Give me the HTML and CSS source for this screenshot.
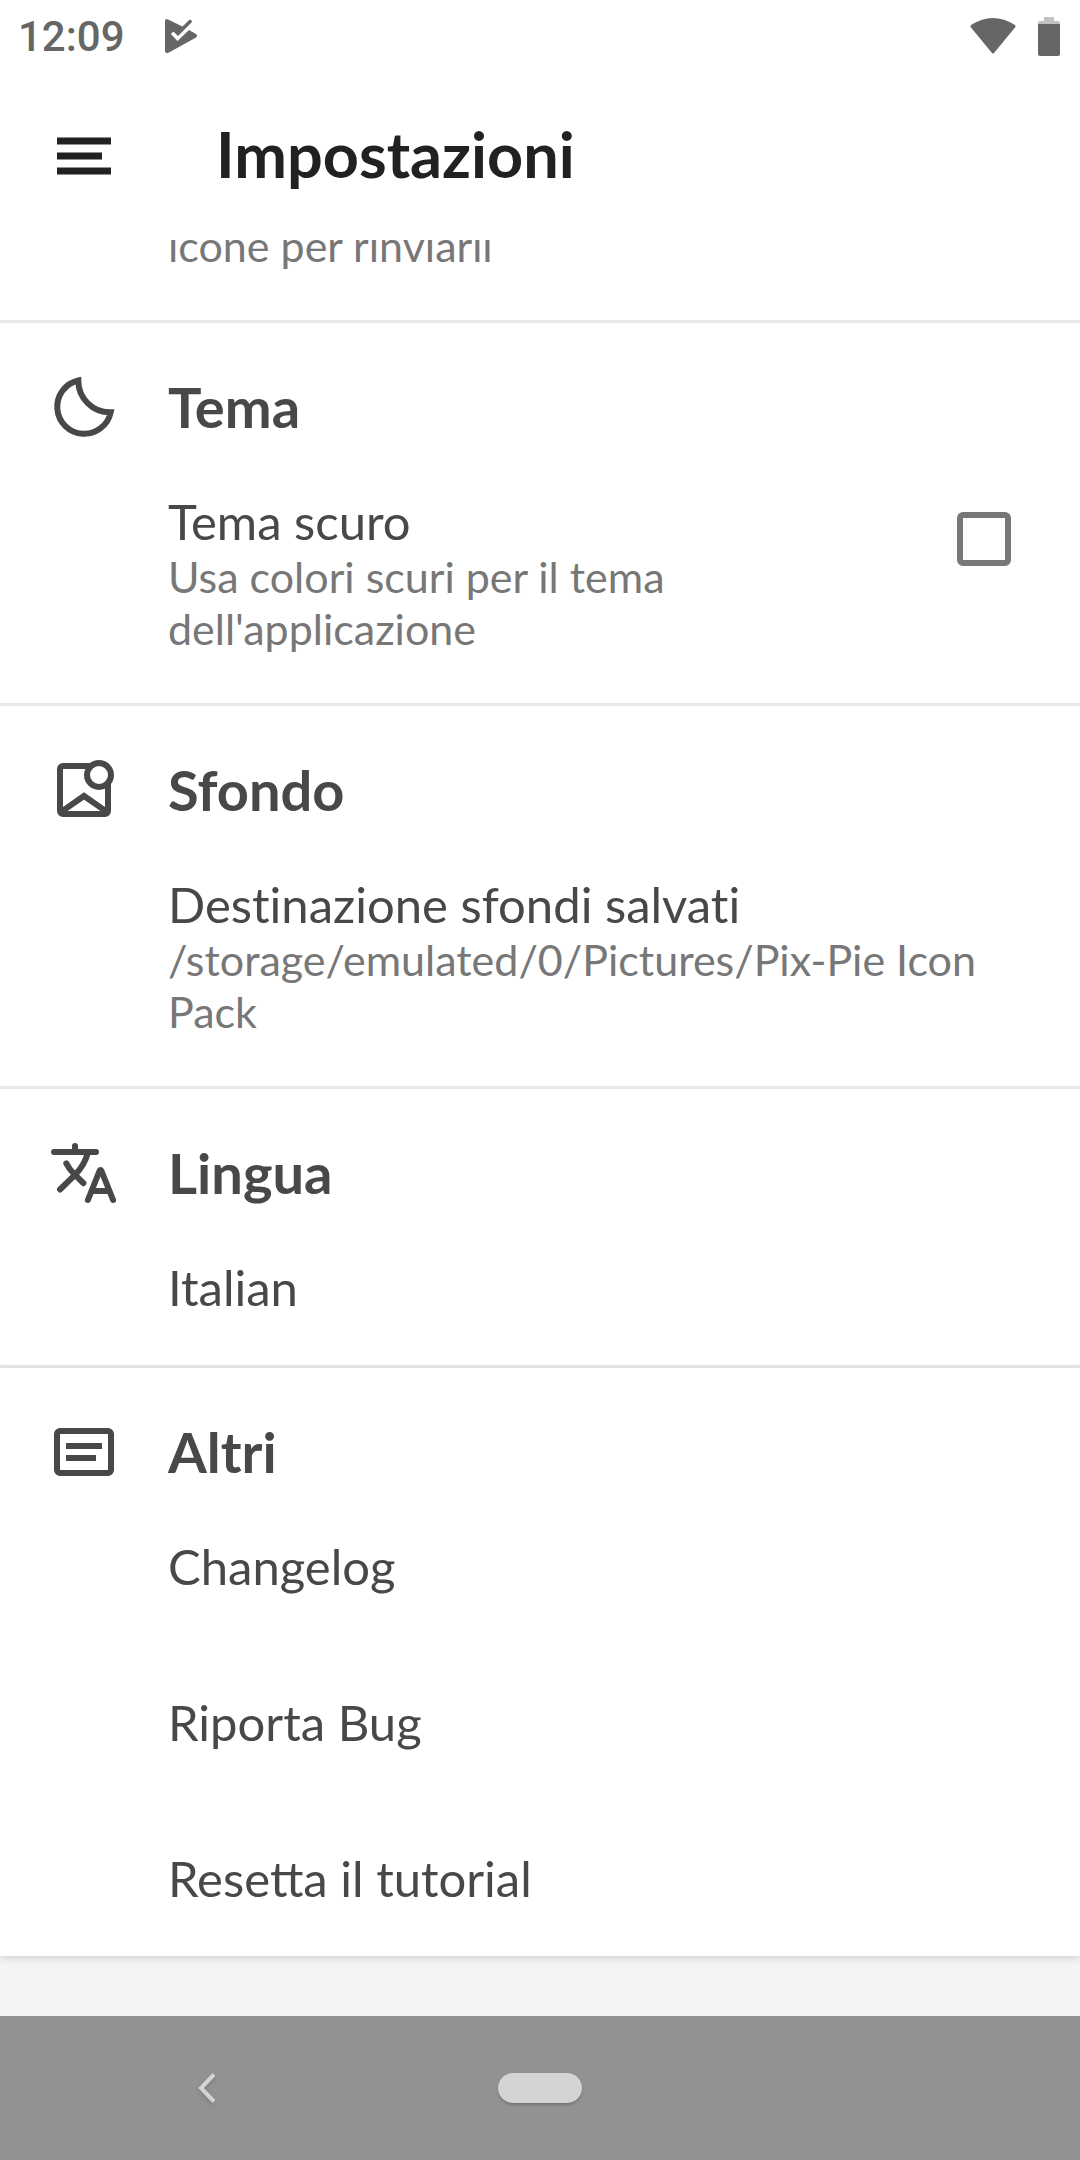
FILE: index.html
```
<!DOCTYPE html>
<html lang="it">
	<head>
		<meta charset="utf-8">
		<meta name="viewport" content="width=device-width, initial-scale=1">
		<title>Impostazioni</title>
		<link rel="stylesheet" href="styles.css">
	</head>
	<body>

		<div class="status">
			<span class="status-time">12:09</span>
			<svg class="status-play" viewBox="0 0 32 34">
				<path fill="#666" d="M0 2Q0-1 3 0.500L17.500 7.500L23.500 1.500Q25 0 26.500 1.500Q27.500 2.500 26.500 3.500L13 17L8.500 12.500L5.800 15L12.500 22L24 11L31 15Q33 17 31 18.500L4 33.500Q0 35 0 32Z"/>
			</svg>
			<svg class="status-wifi" viewBox="0 0 46 36">
				<path fill="#666" d="M1 7Q23-7 45 7Q46 8 45 9.500L24 35Q23 36 22 35L1 9.500Q0 8 1 7Z"/>
			</svg>
			<svg class="status-battery" viewBox="0 0 22 39">
				<path fill="#c2c2c2" d="M6 0h10v4h4q2 0 2 2v2H0V6q0-2 2-2h4z"/>
				<path fill="#666" d="M0 7h22v30q0 2-2 2H2q-2 0-2-2z"/>
			</svg>
		</div>

		<header class="toolbar">
			<button class="menu" type="button" aria-label="Menu">
				<svg class="icon" viewBox="0 0 72 72">
					<path fill="#212121" d="M9 17.500h54v7H9zM9 32.500h45v7H9zM9 47.500h54v7H9z"/>
				</svg>
			</button>
			<h1>Impostazioni</h1>
		</header>

		<main class="list">

			<section class="section section-scrolled">
				<p class="desc">icone per rinviarli</p>
			</section>

			<section class="section">
				<h2>
					<svg class="icon" viewBox="0 0 24 24">
						<path class="line" d="M10.100 3.150C10.100 9.200 15 13.900 20.900 13.750A9 9 0 1 1 10.100 3.150Z"/>
					</svg>
					Tema
				</h2>
				<label class="item item-check">
					<span class="item-text">
						<span class="name">Tema scuro</span>
						<span class="desc">Usa colori scuri per il tema dell'applicazione</span>
					</span>
					<input class="check" type="checkbox">
				</label>
			</section>

			<section class="section">
				<h2>
					<svg class="icon" viewBox="0 0 24 24">
						<rect class="line" x="4" y="4" width="16" height="16" rx="1"/>
						<path class="line" d="M4.500 19.200L12 14L19.500 19.200"/>
						<circle class="line line-white" cx="17" cy="7" r="4"/>
					</svg>
					Sfondo
				</h2>
				<button class="item" type="button">
					<span class="name name-plain">Destinazione sfondi salvati</span>
					<span class="desc">/storage/emulated/0/Pictures/Pix-Pie Icon Pack</span>
				</button>
			</section>

			<section class="section">
				<h2>
					<svg class="icon" viewBox="0 0 24 24">
						<path class="line line-round" d="M2 5H16M9 3V5M13.200 5.500C12.400 8.500 11 10.600 9 12.600L4 17.500M6.100 8.800C6.800 10.200 7.800 11.500 9 12.600L11.800 15.400M13.300 21L17.100 11.500Q17.500 10.500 17.900 11.500L21.700 21M14.800 18H20.200"/>
					</svg>
					Lingua
				</h2>
				<button class="item" type="button">
					<span class="name">Italian</span>
				</button>
			</section>

			<section class="section">
				<h2>
					<svg class="icon" viewBox="0 0 24 24">
						<rect class="line" x="3" y="5" width="18" height="14" rx="1"/>
						<path class="line" d="M6 10H18M6 14H16"/>
					</svg>
					Altri
				</h2>
				<button class="item" type="button">
					<span class="name">Changelog</span>
				</button>
				<button class="item" type="button">
					<span class="name">Riporta Bug</span>
				</button>
				<button class="item" type="button">
					<span class="name">Resetta il tutorial</span>
				</button>
			</section>

		</main>

		<nav class="navbar">
			<button class="nav-back" type="button" aria-label="Indietro">
				<svg viewBox="0 0 18 30">
					<path fill="none" stroke="#d4d4d4" stroke-width="4" d="M16 1.500L3 15L16 28.500"/>
				</svg>
			</button>
			<button class="nav-home" type="button" aria-label="Home"></button>
		</nav>

	</body>
</html>
```
FILE: styles.css
```
*{
	box-sizing: border-box;
}

body{
	margin:0;
	min-height:100vh;
	display: flex;
	flex-direction: column;
	background-color: #f4f4f4;
	color:#484848;
	font-family: Lato, "Open Sans", sans-serif;
}

h1,h2,p{
	margin:0;
}

button{
	border:0;
	padding:0;
	background: none;
	color:inherit;
	font-family: inherit;
	text-align: left;
}

svg{
	display: block;
}

/* status bar */
.status{
	display: flex;
	align-items: center;
	height:72px;
	padding:0 20px 0 18px;
	background-color: #fff;
}

.status-time{
	font-family: Roboto, sans-serif;
	font-size:42px;
	font-weight: 500;
	color:#666;
}

.status-play{
	width:32px;
	height:34px;
	margin-left:40px;
}

.status-wifi{
	width:46px;
	height:36px;
	margin-left:auto;
}

.status-battery{
	width:22px;
	height:39px;
	margin-left:22px;
}

/* toolbar */
.toolbar{
	display: flex;
	align-items: center;
	gap:96px;
	height:168px;
	padding:0 48px;
	background-color: #fff;
}

.toolbar h1{
	padding-bottom:4px;
	font-size:63px;
	line-height:72px;
	font-weight: 700;
	color:#212121;
}

.icon{
	width:72px;
	height:72px;
	flex:none;
}

.line{
	fill:none;
	stroke:#484848;
	stroke-width:2;
}

.line-white{
	fill:#fff;
}

.line-round{
	stroke-linecap: round;
	stroke-linejoin: round;
}

/* settings */
.list{
	overflow: hidden;
	padding-bottom:12px;
}

.section{
	background-color: #fff;
	border-bottom:3px solid #e9e9e9;
}

.section:last-child{
	border-bottom:0;
	box-shadow: 0 2px 8px rgba(0,0,0,0.15);
}

/* the list is scrolled, the first row goes under the toolbar */
.section-scrolled{
	margin-top:-20px;
	padding:0 48px 48px 168px;
}

.section h2{
	display: flex;
	align-items: center;
	gap:48px;
	padding:48px 48px 0;
	font-size:56px;
	line-height:72px;
	font-weight: 700;
}

.item{
	display: block;
	width:100%;
	padding:48px 48px 48px 168px;
}

.item-check{
	display: flex;
	align-items: flex-start;
	padding-right:69px;
}

.item-text{
	flex:1;
	padding-right:96px;
}

.name{
	display: block;
	font-size:49px;
	line-height:60px;
}

.name-plain{
	font-variant-ligatures: none;
}

.desc{
	display: block;
	font-size:43px;
	line-height:52px;
	color:#777;
}

.check{
	appearance: none;
	width:54px;
	height:54px;
	margin:21px 0 0;
	border:6px solid #777;
	border-radius: 6px;
}

.check:checked{
	background-color: #777;
}

/* navigation bar */
.navbar{
	display: grid;
	grid-template-columns: 1fr 84px 1fr;
	align-items: center;
	height:144px;
	margin-top:auto;
	background-color: #929292;
}

.nav-back{
	justify-self: center;
	margin-right:84px;
	filter: drop-shadow(0 2px 2px rgba(0,0,0,0.15));
}

.nav-back svg{
	width:18px;
	height:30px;
}

.nav-home{
	height:30px;
	border-radius: 15px;
	background-color: #d4d4d4;
	box-shadow: 0 2px 3px rgba(0,0,0,0.2);
}
```
